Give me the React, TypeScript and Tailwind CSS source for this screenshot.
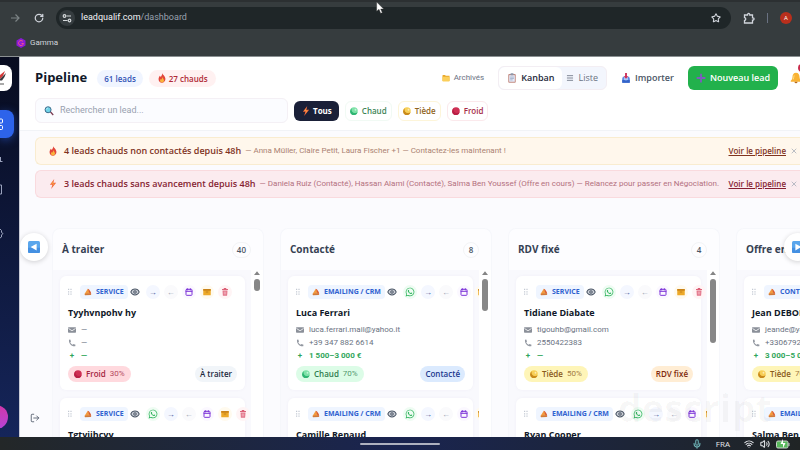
import React, { useState } from 'react';
import {
    Calendar,
    Eye,
    LogOut,
    Menu,
    Mic,
    RotateCw,
    Star,
    Volume2,
    Wifi,
    X,
} from 'lucide-react';
import { FaWhatsapp } from 'react-icons/fa';

type Heat = 'Froid' | 'Chaud' | 'Tiède';

interface Lead {
    name: string;
    tag: string;
    whatsapp: boolean;
    email: string;
    phone: string;
    budget: string;
    heat: Heat;
    score: string;
}

interface Column {
    title: string;
    count: number;
    stage: string;
    thumb: string;
    leads: Lead[];
}

const columns: Column[] = [
    {
        title: 'À traiter',
        count: 40,
        stage: 'bg-slate-100 text-slate-800',
        thumb: 'h-3',
        leads: [
            { name: 'Tyyhvnpohv hy', tag: 'SERVICE', whatsapp: false, email: '—', phone: '—', budget: '—', heat: 'Froid', score: '30%' },
            { name: 'Tgtyjjhcyy', tag: 'SERVICE', whatsapp: true, email: '—', phone: '—', budget: '—', heat: 'Froid', score: '30%' },
        ],
    },
    {
        title: 'Contacté',
        count: 8,
        stage: 'bg-blue-100 text-blue-900',
        thumb: 'h-8',
        leads: [
            { name: 'Luca Ferrari', tag: 'EMAILING / CRM', whatsapp: true, email: 'luca.ferrari.mail@yahoo.it', phone: '+39 347 882 6614', budget: '1 500–3 000 €', heat: 'Chaud', score: '70%' },
            { name: 'Camille Renaud', tag: 'EMAILING / CRM', whatsapp: true, email: '—', phone: '—', budget: '—', heat: 'Chaud', score: '70%' },
        ],
    },
    {
        title: 'RDV fixé',
        count: 4,
        stage: 'bg-orange-100 text-orange-900',
        thumb: 'h-16',
        leads: [
            { name: 'Tidiane Diabate', tag: 'SERVICE', whatsapp: true, email: 'tigouhb@gmail.com', phone: '2550422383', budget: '—', heat: 'Tiède', score: '50%' },
            { name: 'Ryan Cooper', tag: 'EMAILING / CRM', whatsapp: true, email: '—', phone: '—', budget: '—', heat: 'Tiède', score: '50%' },
        ],
    },
    {
        title: 'Offre en cours',
        count: 5,
        stage: 'bg-purple-100 text-purple-900',
        thumb: 'h-16',
        leads: [
            { name: 'Jean DEBON', tag: 'CONTENU', whatsapp: true, email: 'jeande@yahoo.fr', phone: '+33067920', budget: '3 000–5 000 €', heat: 'Tiède', score: '70%' },
            { name: 'Salma Ben Youssef', tag: 'EMAILING / CRM', whatsapp: true, email: '—', phone: '—', budget: '—', heat: 'Chaud', score: '70%' },
        ],
    },
];

const heatPill = {
    Froid: 'bg-[#ffd9de] text-[#a32440]',
    Chaud: 'bg-[#dcfce7] text-[#2f7d4f]',
    Tiède: 'bg-[#fef5b8] text-[#8a5a1c]',
};

const heatDot = {
    Froid: ['#cf2f54', '#b91f45'],
    Chaud: ['#7ee2a8', '#2fb573'],
    Tiède: ['#f7cf57', '#c98a1b'],
};

const HeatDot = ({ heat }: { heat: Heat }) => (
    <svg viewBox="0 0 16 16" className="size-2 shrink-0" aria-hidden="true">
        <circle cx="8" cy="8" r="7.5" fill={heatDot[heat][0]} />
        <path d="M4 2.500a7.500 7.500 0 1 0 11 8 6 6 0 0 1-4 1.500A6.500 6.500 0 0 1 4 2.500z" fill={heatDot[heat][1]} />
        {heat !== 'Froid' && <circle cx="11" cy="5.500" r="1.800" fill="#fff" opacity=".55" />}
    </svg>
);

const Flame = () => (
    <svg viewBox="0 0 16 16" className="size-2.5 shrink-0" aria-hidden="true">
        <path d="M8.500.5c.5 2.500 4.800 4.500 5 8.700.2 3.800-2.600 6.300-5.600 6.300s-5.600-2.300-5.400-5.900C2.600 7.500 3.700 6 4.300 4.500c.9.600 1.300 1.200 1.500 2C7.200 5 8.400 3 8.500.5z" fill="#e2463a" />
        <path d="M8.300 6.500c.3 2 2.900 3 2.900 5.600 0 2-1.500 3-3.200 3s-3.200-1-3.200-3c0-1.300.6-2 1-2.700.6.300.9.700 1.100 1.200.9-1 1.400-2.400 1.400-4.100z" fill="#f9b43c" />
    </svg>
);

const Bolt = () => (
    <svg viewBox="0 0 16 16" className="size-2.5 shrink-0" aria-hidden="true">
        <path d="M10 0 3 9h4l-2 7 8-10H8.500z" fill="#f0643c" />
        <path d="M9 2.500 5 8h3.500l-1.500 4.500L10.800 7H7.500z" fill="#f9a03f" />
    </svg>
);

const Loupe = () => (
    <svg viewBox="0 0 16 16" className="size-2.5 shrink-0" aria-hidden="true">
        <path d="m9.500 10 1.500-1.500 4.500 5-1.500 1.700z" fill="#7a3b52" />
        <circle cx="6.500" cy="6" r="4.800" fill="#6fd3e8" stroke="#3d6c8c" strokeWidth="1.600" />
        <path d="M4 5.500A2.800 2.800 0 0 1 6.500 3" stroke="#d8f7ff" strokeWidth="1" fill="none" />
    </svg>
);

const Folder = () => (
    <svg viewBox="0 0 16 16" className="size-2 shrink-0" aria-hidden="true">
        <path d="M1 3c0-.6.400-1 1-1h4l1.500 1.500H15V14H1z" fill="#e9a92c" />
        <path d="M1 5.500h14V14c0 .6-.4 1-1 1H2c-.6 0-1-.4-1-1z" fill="#fbcf5b" />
    </svg>
);

const Clipboard = () => (
    <svg viewBox="0 0 16 16" className="size-2.5 shrink-0" aria-hidden="true">
        <rect x="2" y="1.500" width="12" height="14" rx="1.500" fill="#c28a80" />
        <rect x="3.500" y="3.500" width="9" height="10.500" fill="#e3e9f8" />
        <rect x="5.500" y="0.500" width="5" height="3" rx="1" fill="#8d96a8" />
        <path d="M5 6.500h6M5 8.700h6M5 11h4" stroke="#8796b4" strokeWidth="1" />
    </svg>
);

const Inbox = () => (
    <svg viewBox="0 0 16 16" className="size-2.5 shrink-0" aria-hidden="true">
        <path d="M3 6h10l1 3v6.500H2V9z" fill="#4f7fe0" />
        <path d="M4.500 6.500h7v5h-7z" fill="#a9c6f7" />
        <path d="M2 11h3.500l1 1.500h3l1-1.500H14v4.500H2z" fill="#3464c8" />
        <path d="M6.500 0h3v5h2.300L8 9 4.200 5h2.300z" fill="#cf2f5a" />
    </svg>
);

const Bell = () => (
    <svg viewBox="0 0 16 16" className="size-3 shrink-0" aria-hidden="true">
        <path d="M8 1c3.200 0 4.500 2.500 4.700 5.500.1 2.500.8 3.700 2.300 5V13H1v-1.500c1.500-1.300 2.200-2.500 2.300-5C3.500 3.500 4.800 1 8 1z" fill="#f9b233" />
        <path d="M6 13h4a2 2 0 0 1-4 0z" fill="#b56a1d" />
        <path d="M5.500 4.500C5 6 5 8 4.300 10" stroke="#fde08a" strokeWidth="1.200" fill="none" />
    </svg>
);

const Horn = () => (
    <svg viewBox="0 0 16 16" className="size-2 shrink-0" aria-hidden="true">
        <path d="M1 12 7.500 1.500 12 9l-7 4z" fill="#f29a3f" />
        <path d="M7.500 1.500c3 .5 6.500 6 7 11l-3.500-2z" fill="#d9592f" />
        <path d="M1 12l10-2 3.500 2.500-1 1.500L2 14.500z" fill="#d07a3a" />
    </svg>
);

const PurplePlus = () => (
    <svg viewBox="0 0 16 16" className="size-2.5 shrink-0" aria-hidden="true">
        <path d="M6.500 1h3v5.500H15v3H9.500V15h-3V9.500H1v-3h5.500z" fill="#7d5bbe" />
    </svg>
);

const Envelope = () => (
    <svg viewBox="0 0 16 16" className="size-2 shrink-0" aria-hidden="true">
        <rect y="2.500" width="16" height="11" rx="1.500" fill="#8b9099" />
        <path d="M1 5l7 4.500L15 5" stroke="#fff" strokeWidth="1.600" fill="none" />
    </svg>
);

const Handset = () => (
    <svg viewBox="0 0 16 16" className="size-2 shrink-0" aria-hidden="true">
        <path d="M2 1.500 4.500 1 6 5 4.500 6.500c.8 2.300 2.500 4 5 5L11 10l4 1.500-.5 3C7 15.500 1 9 2 1.500z" fill="#9297a0" />
    </svg>
);

const Box = () => (
    <svg viewBox="0 0 16 16" className="size-2 shrink-0" aria-hidden="true">
        <rect x=".5" y="2" width="15" height="12.500" rx="1" fill="#eda928" />
        <path d="M.5 3c0-.6.400-1 1-1h13c.6 0 1 .4 1 1v2.500H.5z" fill="#c9831a" />
        <path d="M5.500 8h5" stroke="#a96a12" strokeWidth="1.200" />
    </svg>
);

const Bin = () => (
    <svg viewBox="0 0 16 16" className="size-2 shrink-0" aria-hidden="true">
        <path d="M2 3h12M6 2.500V1h4v1.500" stroke="#d9536c" strokeWidth="1.800" fill="none" />
        <path d="M3 5h10l-.8 10.500H3.800z" fill="#e27388" />
        <path d="M6.500 7v6M9.500 7v6" stroke="#fbd7dd" strokeWidth="1.200" />
    </svg>
);

const Grip = () => (
    <svg viewBox="0 0 5 8" className="h-2 w-1 shrink-0" fill="#c3c9d3" aria-hidden="true">
        <path d="M0 0h1.500v1.500H0zM3 0h1.500v1.500H3zM0 3h1.500v1.500H0zM3 3h1.500v1.500H3zM0 6h1.500v1.500H0zM3 6h1.500v1.500H3z" />
    </svg>
);

const ArrowTile = ({ flip }: { flip?: boolean }) => (
    <svg viewBox="0 0 16 16" className="size-3" aria-hidden="true">
        <rect width="16" height="16" rx="2" fill="#5aa6ec" />
        <path d="M0 9h16v5a2 2 0 0 1-2 2H2a2 2 0 0 1-2-2z" fill="#4490e2" />
        <path d={flip ? 'M4.500 3.500v9l8-4.500z' : 'M11.500 3.500v9l-8-4.500z'} fill="#fff" />
    </svg>
);

const iconBtn = 'flex size-3.5 shrink-0 items-center justify-center rounded-full';
const smallText = "font-['Roboto',sans-serif]";

const LeadCard = ({ lead, column }: { lead: Lead; column: Column }) => (
    <article className="w-[185px] shrink-0 rounded-md bg-white p-2 pt-[9px] shadow-[0_0_3px_rgba(100,90,160,0.06)]">
        <div className="flex h-3.5 items-center">
            <Grip />
            <span className="ml-2 flex h-3.5 shrink-0 items-center gap-1 rounded-sm bg-[#eff5ff] px-1 text-[7px] font-bold whitespace-nowrap text-[#2f62d0]">
                <Horn />
                {lead.tag}
            </span>
            <div className="flex gap-1">
                <button aria-label="Voir" className={iconBtn}><Eye className="size-2.5 fill-gray-300 text-gray-600" strokeWidth={2.5} /></button>
                {lead.whatsapp && (
                    <button aria-label="WhatsApp" className={`${iconBtn} bg-[#effcf3] text-[#2fb45c]`}><FaWhatsapp className="size-2.5" /></button>
                )}
                <button aria-label="Étape suivante" className={`${iconBtn} bg-[#f4f7ff] text-[8px] font-bold text-[#44599b]`}>→</button>
                <button aria-label="Étape précédente" className={`${iconBtn} bg-[#fafafc] text-[8px] text-gray-400`}>←</button>
                <button aria-label="Rendez-vous" className={`${iconBtn} bg-[#fbf8ff] text-[#7e35d8]`}><Calendar className="size-2" strokeWidth={3} /></button>
                <button aria-label="Archiver" className={`${iconBtn} bg-[#fffaee]`}><Box /></button>
                <button aria-label="Supprimer" className={`${iconBtn} bg-[#fff4f5]`}><Bin /></button>
            </div>
        </div>
        <h3 className="mt-1.5 text-[9px] leading-4 font-bold whitespace-nowrap text-gray-900">{lead.name}</h3>
        <ul className={`mt-0.5 text-[8px] leading-[13px] whitespace-nowrap text-gray-500 ${smallText}`}>
            <li className="flex items-center gap-[5px]"><Envelope />{lead.email}</li>
            <li className="flex items-center gap-[5px]"><Handset />{lead.phone}</li>
            <li className="flex items-center gap-[5px] font-bold text-[#2fa65a]"><span className="w-2 shrink-0 text-center">+</span>{lead.budget}</li>
        </ul>
        <div className="mt-1 flex items-center justify-between text-[8px] leading-4 font-semibold whitespace-nowrap">
            <span className={`flex items-center gap-1 rounded-full px-1.5 ${heatPill[lead.heat]}`}>
                <HeatDot heat={lead.heat} />
                {lead.heat} <span className={`font-normal opacity-80 ${smallText}`}>{lead.score}</span>
            </span>
            <span className={`rounded-full px-[5px] ${column.stage}`}>{column.title}</span>
        </div>
    </article>
);

const KanbanColumn = ({ column }: { column: Column }) => (
    <section className="flex w-[212px] shrink-0 flex-col rounded-t-lg border border-b-0 border-[#f6f7fb] bg-[#fdfdff]">
        <header className="flex h-[41px] shrink-0 items-center justify-between pr-3 pl-[9px]">
            <h2 className="text-[10px] font-bold text-gray-700">{column.title}</h2>
            <span className="flex h-4 min-w-4 items-center justify-center rounded-full border border-gray-100 px-1 text-[8px] font-semibold text-gray-600">{column.count}</span>
        </header>
        <div className="flex min-h-0 flex-1 bg-[#f9f9fd]">
            <div className="flex min-w-0 flex-1 flex-col gap-2 overflow-hidden pt-1.5 pl-[7px]">
                {column.leads.map((lead) => (
                    <LeadCard key={lead.name} lead={lead} column={column} />
                ))}
            </div>
            <div className="flex w-3 shrink-0 flex-col items-center gap-1 bg-white">
                <svg viewBox="0 0 8 5" className="mt-px h-1 w-1.5 shrink-0" aria-hidden="true"><path d="M4 0l4 5H0z" fill="#858585" /></svg>
                <div className={`w-1.5 rounded-full bg-[#878787] ${column.thumb}`} />
            </div>
        </div>
    </section>
);

const BrowserBar = () => (
    <div className="shrink-0 border-b border-[#8b9092] bg-[#363c3e] text-gray-300">
        <div className="h-0.5 bg-[#2c3032]" />
        <div className="flex h-8 items-center gap-3">
            <svg viewBox="0 0 10 10" className="ml-2.5 size-2.5" fill="none" stroke="#7d8486" strokeWidth="1.200" aria-hidden="true"><path d="M1 5h8M5.500 1.500 9 5 5.500 8.500" /></svg>
            <button aria-label="Actualiser" className="ml-0.5"><RotateCw className="size-2.5" strokeWidth={3} /></button>
            <div className="flex h-[22px] flex-1 items-center gap-1.5 rounded-full bg-[#1f2628] pr-2.5 pl-[3px]">
                <span className="flex size-4 items-center justify-center rounded-full bg-[#353c3f]">
                    <svg viewBox="0 0 10 10" className="size-2.5" fill="none" stroke="#d5d9db" strokeWidth="1.200"><path d="M4.500 3H9M1 7.500h4.500" /><circle cx="2.500" cy="3" r="1.300" /><circle cx="7.500" cy="7.500" r="1.300" /></svg>
                </span>
                <span className={`flex-1 text-[9px] text-gray-400 ${smallText}`}><span className="text-gray-100">leadqualif.com</span>/dashboard</span>
                <Star className="size-2.5" strokeWidth={2.5} />
            </div>
            <svg viewBox="0 0 12 12" className="size-3" fill="none" stroke="currentColor" strokeWidth="1.300" aria-hidden="true">
                <path d="M1.500 3H4.500C4.300 1 7 1 6.800 3H9.500V5.800C11.500 5.500 11.500 8.300 9.500 8.200V11H1.500V8.500C3.200 8.300 3.200 5.800 1.500 5.700z" />
            </svg>
            <span className="h-2.5 w-px bg-gray-500" />
            <span className="mr-2 flex size-3 items-center justify-center rounded-full bg-[#b92f1c] text-[6px] text-white">A</span>
        </div>
        <div className="flex h-[22px] items-start gap-1 pt-0.5 pl-4">
            <svg viewBox="0 0 10 10" className="mt-0.5 size-2.5" aria-hidden="true">
                <path d="M5 0l4.500 2.500v5L5 10 .5 7.500v-5z" fill="#8b1bd6" />
                <path d="M7 3.500A2.500 2.500 0 1 0 7.500 5.500H5.500" stroke="#f0508f" strokeWidth="1" fill="none" />
            </svg>
            <a href="#gamma" className={`text-[8px] leading-3.5 ${smallText}`}>Gamma</a>
        </div>
    </div>
);

const Sidebar = () => (
    <nav className="flex w-5 shrink-0 flex-col overflow-hidden border-r border-[#c9cbd6] bg-gradient-to-b from-[#080c20] to-[#15255a] pt-2">
        <div className="flex h-[26px] w-3 shrink-0 items-center rounded-r-lg bg-white">
            <svg viewBox="0 0 8 16" className="h-4 w-2" aria-hidden="true">
                <path d="M0 5 5 1 3 6 0 9z" fill="#d33a3a" />
                <path d="M0 9 6 3 4.500 7 2 10.500H0z" fill="#39393f" />
                <path d="M0 14h4" stroke="#555" />
            </svg>
        </div>
        <button aria-label="Tableau de bord" className="mt-[19px] flex h-7 w-3.5 shrink-0 items-center rounded-r-lg bg-[#2d63ea] text-white shadow-[0_2px_8px_#2d63ea80]">
            <svg viewBox="0 0 4 12" className="h-3 w-1" fill="none" stroke="currentColor"><rect x="-2" y="1" width="4.500" height="4" rx="1" /><rect x="-2" y="7.500" width="4.500" height="4" rx="1" /></svg>
        </button>
        <svg viewBox="0 0 4 90" className="mt-3.5 h-[90px] w-1 shrink-0" fill="none" stroke="#9ba3bd" aria-hidden="true">
            <path d="M0 9.500h2.500M.5 5v4M0 33h1.500V42H0M0 77l1.500 1.500v2L3 81.500 1.500 83v2L0 86" />
        </svg>
        <button aria-label="Compte" className="mt-auto mb-2 -ml-4 size-6 shrink-0 rounded-full bg-gradient-to-b from-[#d136a8] to-[#b541d6]" />
    </nav>
);

const Taskbar = () => (
    <footer className="grid h-[13px] shrink-0 grid-cols-3 items-center bg-gradient-to-r from-[#232728] via-[#1a2450] to-[#202425] text-gray-200">
        <span />
        <span className="mx-auto h-0.5 w-20 rounded-full bg-[#aeb1bf]" />
        <div className="flex items-center justify-end gap-1.5 pr-2.5">
            <Mic className="size-2.5 text-[#6fb5b8]" strokeWidth={2.5} />
            <span className="mx-2 text-[8px] leading-3">FRA</span>
            <Wifi className="size-2.5" strokeWidth={2.5} />
            <Volume2 className="size-2.5" strokeWidth={2.5} />
            <svg viewBox="0 0 14 10" className="h-2.5 w-3.5" aria-hidden="true">
                <rect x=".5" y="2" width="11.500" height="7" rx="1.500" fill="#58b85c" stroke="#c9d2cb" />
                <path d="M13 4v3" stroke="#c9d2cb" />
                <path d="M7 0 4.500 5H7v4l2.500-5H7z" fill="#fff" />
            </svg>
        </div>
    </footer>
);

const heats: { label: Heat; cls: string }[] = [
    { label: 'Chaud', cls: 'border-[#f1faf4] text-[#3d8457]' },
    { label: 'Tiède', cls: 'border-[#fdf5d9] text-[#8f6420]' },
    { label: 'Froid', cls: 'border-[#fbe9ec] text-[#a52c47]' },
];

const App = () => {
    const [search, setSearch] = useState('');

    const pageHeader = () => (
        <header className="flex shrink-0 flex-col gap-2 border-b border-[#f1f3f7] bg-white pt-[9px] pb-[7px] pl-[15px] whitespace-nowrap">
            <div className="flex h-6 items-center">
                <h1 className="text-[13px] font-bold text-gray-900">Pipeline</h1>
                <span className="ml-2.5 rounded-full bg-[#f0f5ff] px-[7px] text-[8px] leading-[17px] font-semibold text-[#3153b5]">61 leads</span>
                <span className="ml-1.5 flex items-center gap-0.5 rounded-full bg-[#fff1f1] px-2 text-[8px] leading-[17px] font-semibold text-[#b02a35]"><Flame />27 chauds</span>
                <button className={`ml-auto flex h-[18px] items-center gap-1 px-1 text-[8px] text-gray-500 ${smallText}`}><Folder />Archivés</button>
                <div className="ml-2.5 flex h-6 items-center rounded-md border border-[#f3eef3] bg-[#f3f6fd] text-[9px]">
                    <button className="flex h-full items-center gap-1 rounded-md bg-white px-2 font-semibold text-gray-800"><Clipboard />Kanban</button>
                    <button className="flex h-full items-center gap-1 pr-2 pl-1 text-gray-500"><Menu className="size-2" strokeWidth={2.5} />Liste</button>
                </div>
                <button className="ml-1.5 flex h-6 items-center gap-1 px-2 text-[9px] font-semibold text-gray-600"><Inbox />Importer</button>
                <button className="ml-1.5 flex h-6 items-center gap-1 rounded-md bg-[#22b14c] px-2 text-[9px] font-semibold text-white"><PurplePlus />Nouveau lead</button>
                <button aria-label="Notifications" className="relative ml-3 flex w-2.5 shrink-0">
                    <Bell />
                    <span className="absolute -top-2 left-2 size-2 rounded-full bg-[#c92a4a]" />
                </button>
            </div>
            <div className="flex h-[25px] items-center gap-1.5 text-[8px] font-semibold">
                <label className="flex h-[25px] w-[253px] items-center gap-1.5 rounded-md border border-[#f4f0f5] bg-[#fbfcff] px-2">
                    <Loupe />
                    <input
                        aria-label="Rechercher un lead"
                        className={`min-w-0 flex-1 bg-transparent text-[9px] font-normal outline-none placeholder:text-gray-400 ${smallText}`}
                        placeholder="Rechercher un lead..."
                        value={search}
                        onChange={(e) => setSearch(e.target.value)}
                    />
                </label>
                <button className="flex h-5 items-center gap-0.5 rounded-md bg-[#1a2038] px-[7px] font-bold text-white"><Bolt />Tous</button>
                {heats.map((h) => (
                    <button key={h.label} className={`flex h-5 items-center gap-1 rounded-md border px-1 ${h.cls}`}>
                        <HeatDot heat={h.label} />
                        {h.label}
                    </button>
                ))}
            </div>
        </header>
    );

    const alertRow = (icon: React.ReactNode, title: string, text: string, box: string, link: string, note: string) => (
        <div className={`flex h-7 items-center rounded-l-md border border-r-0 pl-3 text-[8px] whitespace-nowrap ${box}`}>
            {icon}
            <strong className={`ml-1.5 text-[9px] font-semibold ${link}`}>{title}</strong>
            <span className={`ml-1 ${note} ${smallText}`}>{text}</span>
            <a href="#pipeline" className={`ml-auto font-semibold underline ${link}`}>Voir le pipeline</a>
            <button aria-label="Fermer" className="mr-0.5 ml-1 shrink-0 text-gray-400"><X className="size-2" strokeWidth={2} /></button>
        </div>
    );

    return (
        <div className="relative flex h-screen flex-col overflow-hidden bg-white font-['Open_Sans',sans-serif]">
            <BrowserBar />
            <div className="flex min-h-0 flex-1">
                <Sidebar />
                <main className="relative flex min-w-0 flex-1 flex-col overflow-hidden bg-[#fbfbfe]">
                    {pageHeader()}
                    <div className="mt-1.5 ml-[15px] flex shrink-0 flex-col gap-[5px]">
                        {alertRow(<Flame />, '4 leads chauds non contactés depuis 48h', '— Anna Müller, Claire Petit, Laura Fischer +1 — Contactez-les maintenant !', 'border-[#f9ecd0] bg-[#fff7ec]', 'text-[#80331e]', 'text-[#ab8272]')}
                        {alertRow(<Bolt />, '3 leads chauds sans avancement depuis 48h', '— Daniela Ruiz (Contacté), Hassan Alami (Contacté), Salma Ben Youssef (Offre en cours) — Relancez pour passer en Négociation.', 'border-[#f9dade] bg-[#fbebef]', 'text-[#861f32]', 'text-[#b3707e]')}
                    </div>
                    <div className="mt-[30px] ml-8 flex min-h-0 flex-1 gap-4">
                        {columns.map((column) => (
                            <KanbanColumn key={column.title} column={column} />
                        ))}
                    </div>
                    <button aria-label="Précédent" className="absolute top-[176px] left-0 flex size-7 items-center justify-center rounded-full bg-white shadow-[0_1px_5px_rgba(0,0,0,0.18)]"><ArrowTile /></button>
                    <button aria-label="Suivant" className="absolute top-[176px] -right-3 flex size-7 items-center justify-center rounded-full bg-white shadow-[0_1px_5px_rgba(0,0,0,0.18)]"><ArrowTile flip /></button>
                    <button aria-label="Déconnexion" className="absolute bottom-3.5 left-2.5 text-gray-600"><LogOut className="size-2.5" /></button>
                    <span className="pointer-events-none absolute right-7 bottom-0 text-[38px] leading-[60px] font-bold text-black/3">descript</span>
                </main>
            </div>
            <Taskbar />
            <svg viewBox="0 0 12 18" className="pointer-events-none absolute top-0.5 left-[47%] h-3 w-2" aria-hidden="true">
                <path d="M1 0v14l3.500-3 2.500 6 2.500-1L7 10.500h4.500z" fill="#fff" stroke="#333" strokeWidth=".6" />
            </svg>
        </div>
    );
};

export default App;
